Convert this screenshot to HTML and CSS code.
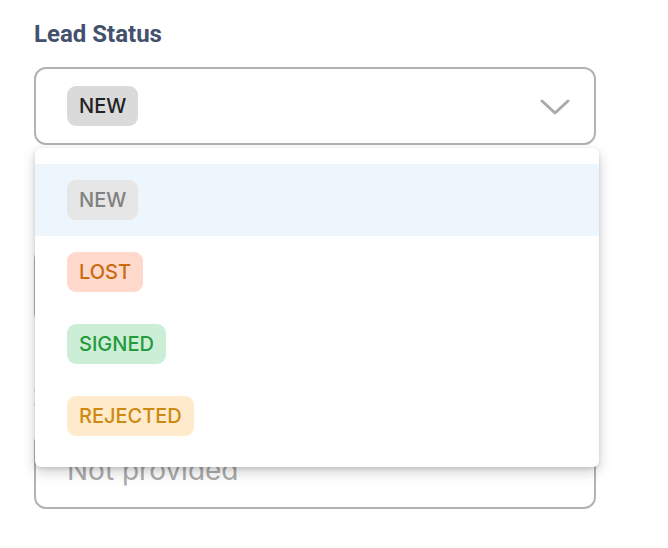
FILE: index.html
```html
<!DOCTYPE html>
<html>
<head>
<meta charset="utf-8">
<link rel="stylesheet" href="styles.css">
</head>
<body>
<div class="form">
  <div class="field">
    <div class="label">Lead Status</div>
    <div class="select">
      <span class="chip chip-current">NEW</span>
      <svg class="chevron" width="30" height="17" viewBox="0 0 30 17"><path d="M2 2 L15 14 L28 2" fill="none" stroke="#aaaaaa" stroke-width="3" stroke-linecap="round" stroke-linejoin="round"/></svg>
    </div>
  </div>
  <div class="field field-2">
    <div class="label">Phone Number</div>
    <div class="input"><span class="placeholder">Not provided</span></div>
  </div>
  <div class="field field-3">
    <div class="label">Zip Code</div>
    <div class="input"><span class="placeholder">Not provided</span></div>
  </div>
</div>
<div class="menu">
  <div class="option active"><span class="chip chip-new">NEW</span></div>
  <div class="option"><span class="chip chip-lost">LOST</span></div>
  <div class="option"><span class="chip chip-signed">SIGNED</span></div>
  <div class="option"><span class="chip chip-rejected">REJECTED</span></div>
</div>
</body>
</html>
```

FILE: styles.css
```css
* { box-sizing: border-box; }
html, body { margin: 0; background: #ffffff; }
body { font-family: Roboto, "Noto Sans", sans-serif; position: relative; width: 668px; height: 548px; overflow: hidden; }
.form { padding: 20px 0 0 34px; width: 596px; }
.label { font-size: 24px; font-weight: 700; line-height: 28px; color: #44516e; }
.field-2 { margin-top: 55px; }
.field-3 { margin-top: 59px; }
.select {
  margin-top: 19px;
  height: 78px;
  border: 2px solid #b3b3b3;
  border-radius: 12px;
  display: flex;
  align-items: center;
  justify-content: space-between;
  padding: 0 24px 0 31px;
}
.input {
  margin-top: 19px;
  height: 78px;
  border: 2px solid #b3b3b3;
  border-radius: 12px;
  display: flex;
  align-items: center;
  padding: 0 31px;
}
.placeholder { font-family: Inter, Roboto, sans-serif; font-size: 28px; color: #aaaaaa; }
.chip {
  display: inline-flex;
  align-items: center;
  height: 40px;
  padding: 0 12px;
  border-radius: 9px;
  font-family: Inter, Roboto, sans-serif;
  font-size: 20px;
  font-weight: 500;
}
.chip-current { background: #dadada; color: #222222; }
.chevron { display: block; margin-top: 2px; }
.menu {
  position: absolute;
  left: 35px;
  top: 148px;
  width: 564px;
  height: 319px;
  background: #ffffff;
  border-radius: 6px;
  padding: 16px 0 15px;
  box-shadow: 0 5px 14px rgba(0,0,0,0.18), 0 2px 4px rgba(0,0,0,0.12);
}
.option { height: 72px; display: flex; align-items: center; padding-left: 32px; }
.option.active { background: #edf5fd; }
.chip-new { background: #e6e6e6; color: #808080; }
.chip-lost { background: #ffd9cc; color: #cc6a10; }
.chip-signed { background: #cdeed6; color: #239a3b; }
.chip-rejected { background: #ffeacc; color: #cc8a10; }
```
